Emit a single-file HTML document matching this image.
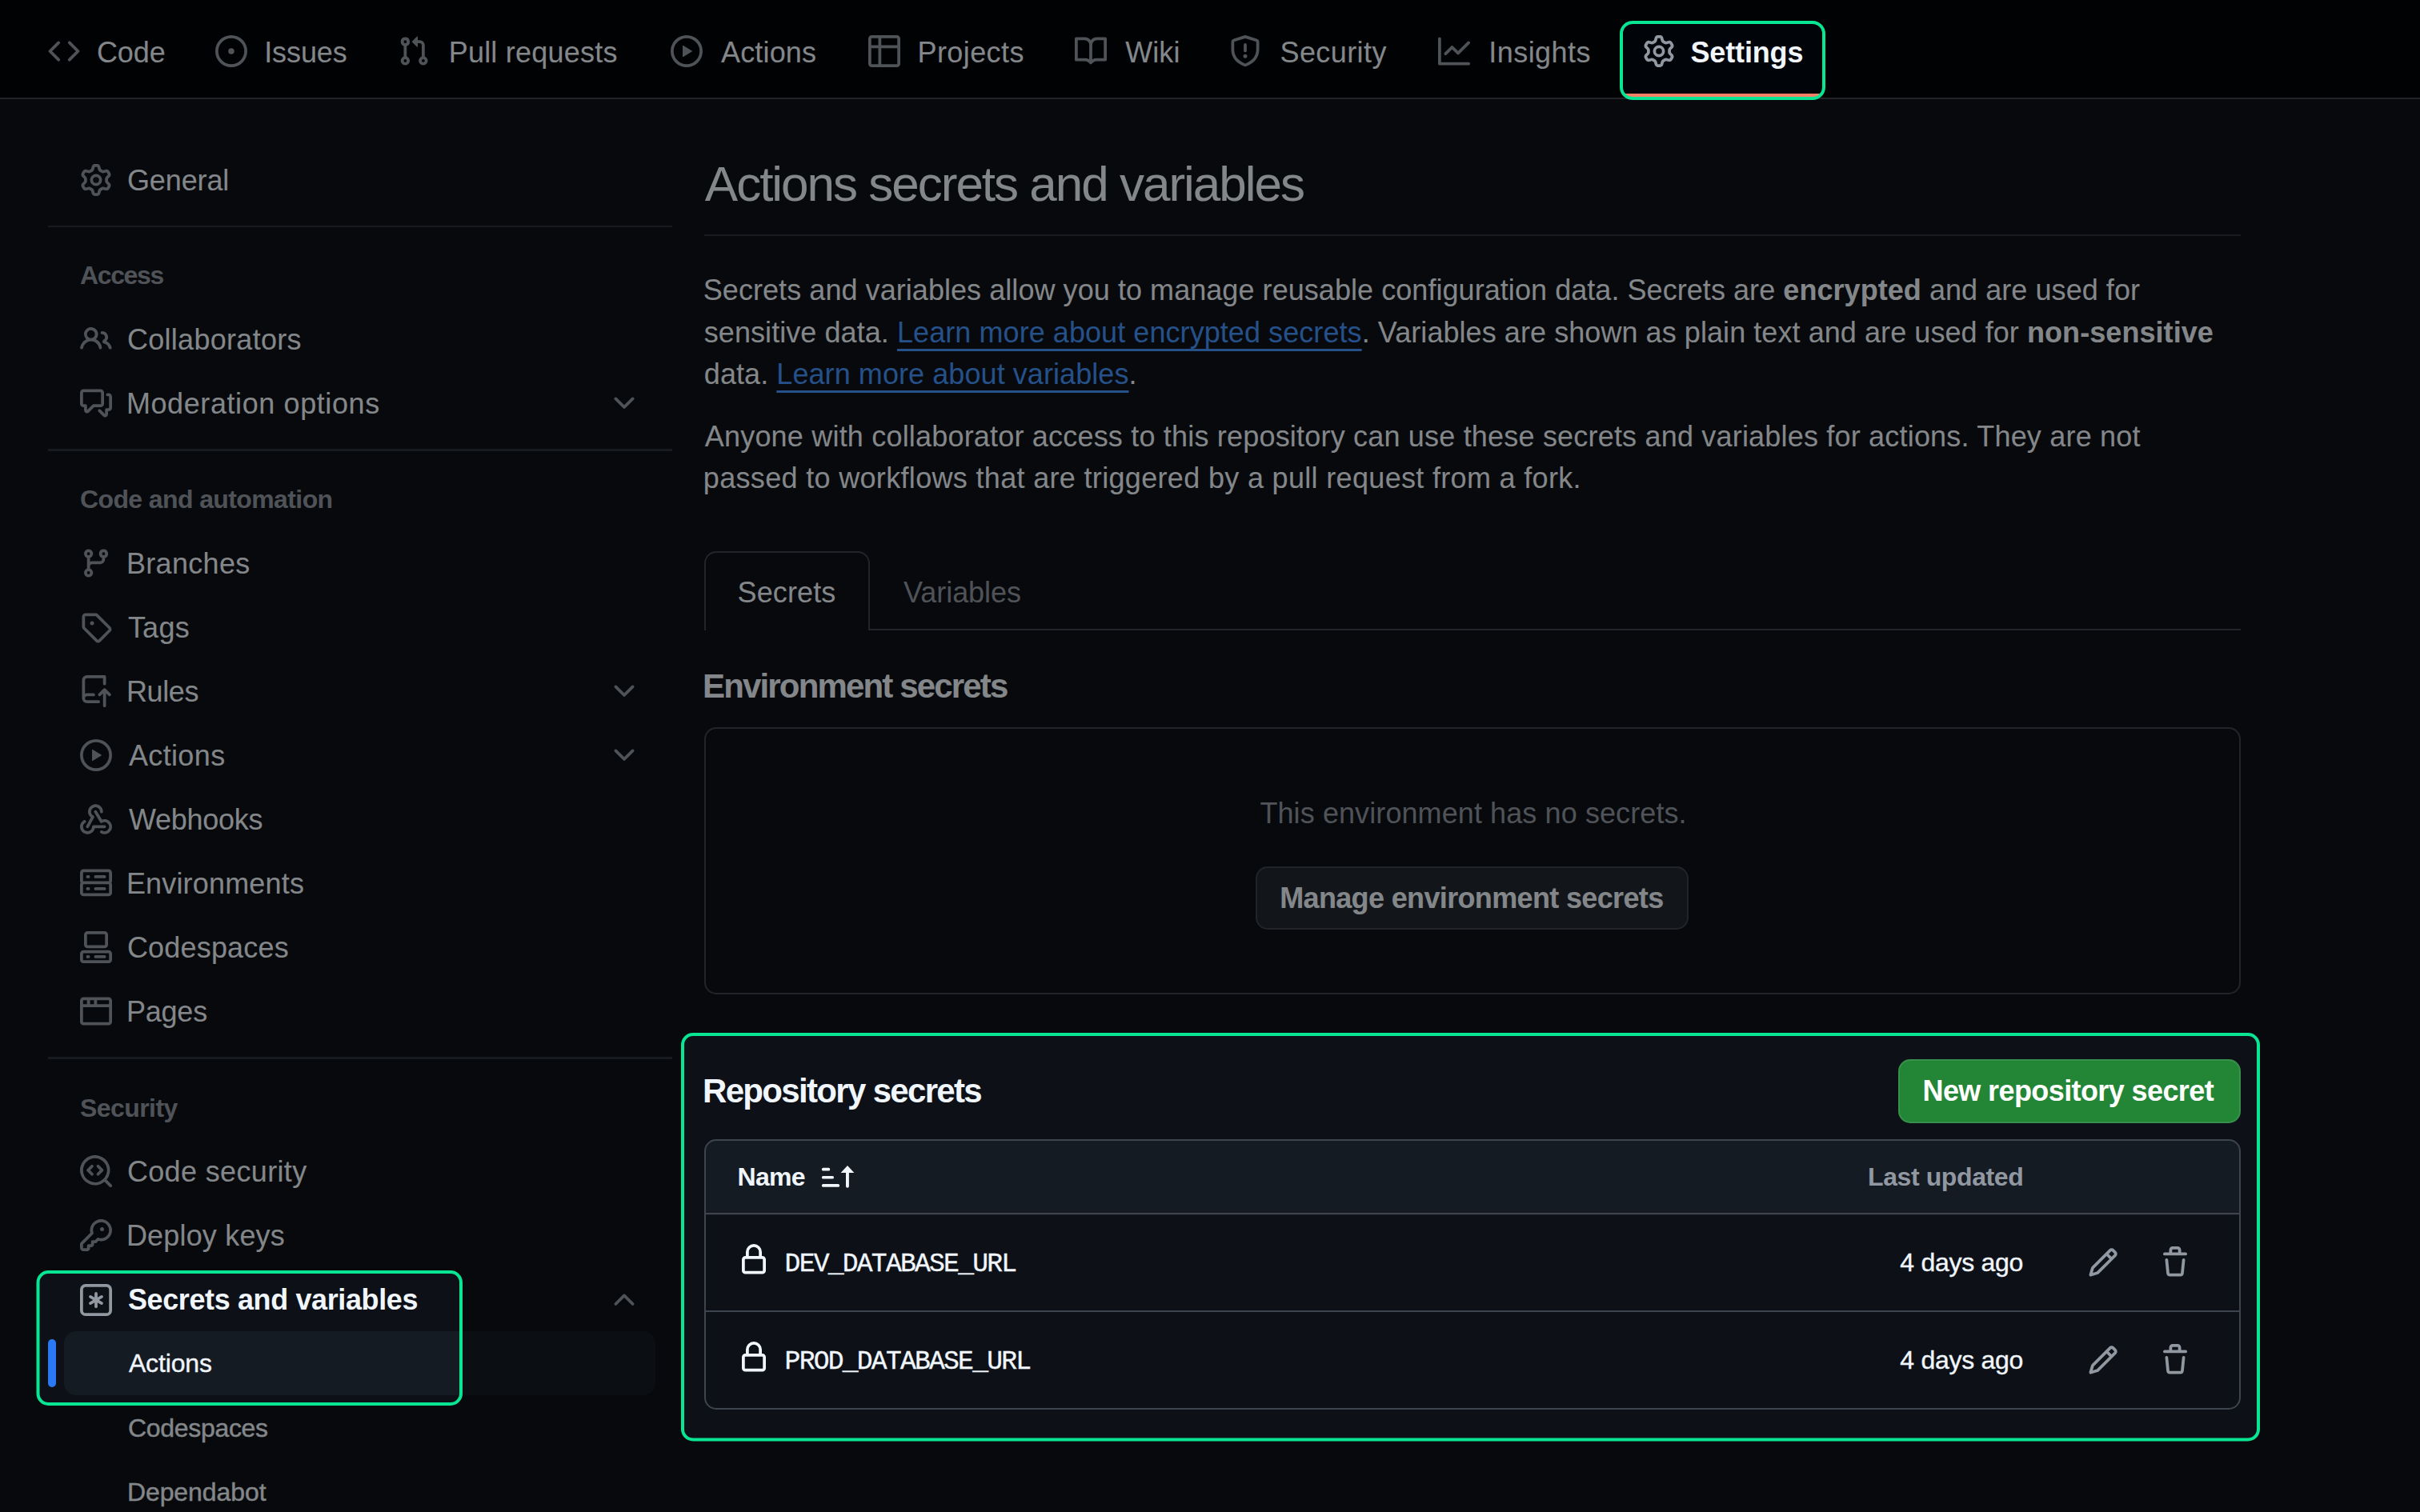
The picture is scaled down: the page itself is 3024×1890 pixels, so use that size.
<!DOCTYPE html>
<html><head><meta charset="utf-8"><title>Actions secrets and variables</title>
<style>
html,body{margin:0;padding:0;}
body{width:3024px;height:1890px;overflow:hidden;background:#0d1117;position:relative;font-family:'Liberation Sans', sans-serif;}
.t{position:absolute;white-space:pre;line-height:1;}
.t b{font-weight:700;}
.s{-webkit-text-stroke:0.35px currentColor;}
.r{position:absolute;}
.i{position:absolute;}
.ov{position:absolute;left:0;top:0;}
</style></head><body>
<div class="r" style="left:0px;top:0px;width:3024px;height:122px;background:#010409;"></div><div class="r" style="left:0px;top:121.5px;width:3024px;height:2.5px;background:#3d444d;"></div><svg class="i" style="left:60.4px;top:44.0px;width:40px;height:40px;fill:#9198a1" viewBox="0 0 16 16"><path d="M4.72 3.22a.75.75 0 0 1 1.06 1.06L2.06 8l3.72 3.72a.75.75 0 1 1-1.06 1.06L.47 8.53a.75.75 0 0 1 0-1.06Zm6.56 0a.75.75 0 1 0-1.06 1.06L13.94 8l-3.72 3.72a.75.75 0 1 0 1.06 1.06l4.25-4.25a.75.75 0 0 0 0-1.06Z"/></svg><div class="t" id="nav0" style="left:120.90px;top:47.8px;font-size:36px;color:#f0f6fc;font-weight:400;letter-spacing:-0.033px;font-family:'Liberation Sans', sans-serif;">Code</div><svg class="i" style="left:269.4px;top:44.0px;width:40px;height:40px;fill:#9198a1" viewBox="0 0 16 16"><path d="M8 9.5a1.5 1.5 0 1 0 0-3 1.5 1.5 0 0 0 0 3Z"/><path d="M8 0a8 8 0 1 1 0 16A8 8 0 0 1 8 0ZM1.5 8a6.5 6.5 0 1 0 13 0 6.5 6.5 0 0 0-13 0Z"/></svg><div class="t" id="nav1" style="left:330.20px;top:47.8px;font-size:36px;color:#f0f6fc;font-weight:400;letter-spacing:-0.100px;font-family:'Liberation Sans', sans-serif;">Issues</div><svg class="i" style="left:497.0px;top:44.0px;width:40px;height:40px;fill:#9198a1" viewBox="0 0 16 16"><path d="M1.5 3.25a2.25 2.25 0 1 1 3 2.122v5.256a2.251 2.251 0 1 1-1.5 0V5.372A2.25 2.25 0 0 1 1.5 3.25Zm5.677-.177L9.573.677A.25.25 0 0 1 10 .854V2.5h1A2.5 2.5 0 0 1 13.5 5v5.628a2.251 2.251 0 1 1-1.5 0V5a1 1 0 0 0-1-1h-1v1.646a.25.25 0 0 1-.427.177L7.177 3.427a.25.25 0 0 1 0-.354ZM3.75 2.5a.75.75 0 1 0 0 1.5.75.75 0 0 0 0-1.5Zm0 9.5a.75.75 0 1 0 0 1.5.75.75 0 0 0 0-1.5Zm8.25.75a.75.75 0 1 0 1.5 0 .75.75 0 0 0-1.5 0Z"/></svg><div class="t" id="nav2" style="left:560.70px;top:47.8px;font-size:36px;color:#f0f6fc;font-weight:400;letter-spacing:0.217px;font-family:'Liberation Sans', sans-serif;">Pull requests</div><svg class="i" style="left:837.5px;top:44.0px;width:40px;height:40px;fill:#9198a1" viewBox="0 0 16 16"><path d="M8 0a8 8 0 1 1 0 16A8 8 0 0 1 8 0ZM1.5 8a6.5 6.5 0 1 0 13 0 6.5 6.5 0 0 0-13 0Zm4.879-2.773 4.264 2.559a.25.25 0 0 1 0 .428l-4.264 2.559A.25.25 0 0 1 6 10.559V5.442a.25.25 0 0 1 .379-.215Z"/></svg><div class="t" id="nav3" style="left:901.00px;top:47.8px;font-size:36px;color:#f0f6fc;font-weight:400;letter-spacing:0.167px;font-family:'Liberation Sans', sans-serif;">Actions</div><svg class="i" style="left:1084.5px;top:44.0px;width:40px;height:40px;fill:#9198a1" viewBox="0 0 16 16"><path d="M0 1.75C0 .784.784 0 1.75 0h12.5C15.216 0 16 .784 16 1.75v12.5A1.75 1.75 0 0 1 14.25 16H1.75A1.75 1.75 0 0 1 0 14.25ZM6.5 6.5v8h7.75a.25.25 0 0 0 .25-.25V6.5Zm8-1.5V1.75a.25.25 0 0 0-.25-.25H6.5V5Zm-13 1.5v7.75c0 .138.112.25.25.25H5v-8ZM5 5V1.5H1.75a.25.25 0 0 0-.25.25V5Z"/></svg><div class="t" id="nav4" style="left:1146.50px;top:47.8px;font-size:36px;color:#f0f6fc;font-weight:400;letter-spacing:0.414px;font-family:'Liberation Sans', sans-serif;">Projects</div><svg class="i" style="left:1343.0px;top:44.0px;width:40px;height:40px;fill:#9198a1" viewBox="0 0 16 16"><path d="M0 1.75A.75.75 0 0 1 .75 1h4.253c1.227 0 2.317.59 3 1.501A3.743 3.743 0 0 1 11.006 1h4.245a.75.75 0 0 1 .75.75v10.5a.75.75 0 0 1-.75.75h-4.507a2.25 2.25 0 0 0-1.591.659l-.622.621a.75.75 0 0 1-1.06 0l-.622-.621A2.25 2.25 0 0 0 5.258 13H.75a.75.75 0 0 1-.75-.75Zm7.251 10.324.004-5.073-.002-2.253A2.25 2.25 0 0 0 5.003 2.5H1.5v9h3.757a3.75 3.75 0 0 1 1.994.574ZM8.755 4.75l-.004 7.322a3.752 3.752 0 0 1 1.992-.572H14.5v-9h-3.495a2.25 2.25 0 0 0-2.25 2.25Z"/></svg><div class="t" id="nav5" style="left:1406.20px;top:47.8px;font-size:36px;color:#f0f6fc;font-weight:400;letter-spacing:0.100px;font-family:'Liberation Sans', sans-serif;">Wiki</div><svg class="i" style="left:1535.9px;top:44.0px;width:40px;height:40px;fill:#9198a1" viewBox="0 0 16 16"><path d="M7.467.133a1.748 1.748 0 0 1 1.066 0l5.25 1.68A1.75 1.75 0 0 1 15 3.48V7c0 1.566-.32 3.182-1.303 4.682-.983 1.498-2.585 2.813-5.032 3.855a1.697 1.697 0 0 1-1.33 0c-2.447-1.042-4.049-2.357-5.032-3.855C1.32 10.182 1 8.566 1 7V3.48a1.755 1.755 0 0 1 1.217-1.667Zm.61 1.429a.25.25 0 0 0-.153 0l-5.25 1.68a.25.25 0 0 0-.174.238V7c0 1.358.275 2.666 1.057 3.86.784 1.194 2.121 2.34 4.366 3.297a.196.196 0 0 0 .154 0c2.245-.956 3.582-2.104 4.366-3.298C13.225 9.666 13.5 8.36 13.5 7V3.48a.251.251 0 0 0-.174-.237l-5.25-1.68ZM8.75 4.75v3a.75.75 0 0 1-1.5 0v-3a.75.75 0 0 1 1.5 0ZM9 10.5a1 1 0 1 1-2 0 1 1 0 0 1 2 0Z"/></svg><div class="t" id="nav6" style="left:1599.50px;top:47.8px;font-size:36px;color:#f0f6fc;font-weight:400;letter-spacing:0.414px;font-family:'Liberation Sans', sans-serif;">Security</div><svg class="i" style="left:1797.3px;top:44.0px;width:40px;height:40px;fill:#9198a1" viewBox="0 0 16 16"><path d="M1.5 1.75V13.5h13.75a.75.75 0 0 1 0 1.5H.75a.75.75 0 0 1-.75-.75V1.75a.75.75 0 0 1 1.5 0Zm14.28 2.53-5.25 5.25a.75.75 0 0 1-1.06 0L7 7.06 4.28 9.78a.751.751 0 0 1-1.042-.018.751.751 0 0 1-.018-1.042l3.25-3.25a.75.75 0 0 1 1.06 0L10 7.94l4.72-4.72a.751.751 0 0 1 1.042.018.751.751 0 0 1 .018 1.042Z"/></svg><div class="t" id="nav7" style="left:1860.30px;top:47.8px;font-size:36px;color:#f0f6fc;font-weight:400;letter-spacing:0.443px;font-family:'Liberation Sans', sans-serif;">Insights</div><svg class="i" style="left:2053.0px;top:44.0px;width:40px;height:40px;fill:#9198a1" viewBox="0 0 16 16"><path d="M8 0a8.2 8.2 0 0 1 .701.031C9.444.095 9.99.645 10.16 1.29l.288 1.107c.018.066.079.158.212.224.231.114.454.243.668.386.123.082.233.09.299.071l1.103-.303c.644-.176 1.392.021 1.82.63.27.385.506.792.704 1.218.315.675.111 1.422-.364 1.891l-.814.806c-.049.048-.098.147-.088.294.016.257.016.515 0 .772-.01.147.038.246.088.294l.814.806c.475.469.679 1.216.364 1.891a7.977 7.977 0 0 1-.704 1.217c-.428.61-1.176.807-1.82.63l-1.102-.302c-.067-.019-.177-.011-.3.071a5.909 5.909 0 0 1-.668.386c-.133.066-.194.158-.211.224l-.29 1.106c-.168.646-.715 1.196-1.458 1.26a8.006 8.006 0 0 1-1.402 0c-.743-.064-1.289-.614-1.458-1.26l-.289-1.106c-.018-.066-.079-.158-.212-.224a5.738 5.738 0 0 1-.668-.386c-.123-.082-.233-.09-.299-.071l-1.103.303c-.644.176-1.392-.021-1.82-.63a8.12 8.12 0 0 1-.704-1.218c-.315-.675-.111-1.422.363-1.891l.815-.806c.05-.048.098-.147.088-.294a6.214 6.214 0 0 1 0-.772c.01-.147-.038-.246-.088-.294l-.815-.806C.635 6.045.431 5.298.746 4.623a7.92 7.92 0 0 1 .704-1.217c.428-.61 1.176-.807 1.82-.63l1.102.302c.067.019.177.011.3-.071.214-.143.437-.272.668-.386.133-.066.194-.158.211-.224l.29-1.106C6.009.645 6.556.095 7.299.03 7.53.01 7.764 0 8 0Zm-.571 1.525c-.036.003-.108.036-.137.146l-.289 1.105c-.147.561-.549.967-.998 1.189-.173.086-.34.183-.5.29-.417.278-.97.423-1.529.27l-1.103-.303c-.109-.03-.175.016-.195.045-.22.312-.412.644-.573.99-.014.031-.021.11.059.19l.815.806c.411.406.562.957.53 1.456a4.709 4.709 0 0 0 0 .582c.032.499-.119 1.05-.53 1.456l-.815.806c-.081.08-.073.159-.059.19.162.346.353.677.573.989.02.03.085.076.195.046l1.102-.303c.56-.153 1.113-.008 1.53.27.161.107.328.204.501.29.447.222.85.629.997 1.189l.289 1.105c.029.109.101.143.137.146a6.6 6.6 0 0 0 1.142 0c.036-.003.108-.036.137-.146l.289-1.105c.147-.561.549-.967.998-1.189.173-.086.34-.183.5-.29.417-.278.97-.423 1.529-.27l1.103.303c.109.029.175-.016.195-.045.22-.313.411-.644.573-.99.014-.031.021-.11-.059-.19l-.815-.806c-.411-.406-.562-.957-.53-1.456a4.709 4.709 0 0 0 0-.582c-.032-.499.119-1.05.53-1.456l.815-.806c.081-.08.073-.159.059-.19a6.464 6.464 0 0 0-.573-.989c-.02-.03-.085-.076-.195-.046l-1.102.303c-.56.153-1.113.008-1.53-.27a4.44 4.44 0 0 0-.501-.29c-.447-.222-.85-.629-.997-1.189l-.289-1.105c-.029-.11-.101-.143-.137-.146a6.6 6.6 0 0 0-1.142 0ZM11 8a3 3 0 1 1-6 0 3 3 0 0 1 6 0ZM9.5 8a1.5 1.5 0 1 0-3.001.001A1.5 1.5 0 0 0 9.5 8Z"/></svg><div class="t" id="navset" style="left:2112.50px;top:47.8px;font-size:36px;color:#f0f6fc;font-weight:700;letter-spacing:-0.157px;font-family:'Liberation Sans', sans-serif;">Settings</div><div class="r" style="left:2030px;top:116.5px;width:244px;height:4px;background:#f78166;"></div><svg class="i" style="left:99.5px;top:205.3px;width:40px;height:40px;fill:#9198a1" viewBox="0 0 16 16"><path d="M8 0a8.2 8.2 0 0 1 .701.031C9.444.095 9.99.645 10.16 1.29l.288 1.107c.018.066.079.158.212.224.231.114.454.243.668.386.123.082.233.09.299.071l1.103-.303c.644-.176 1.392.021 1.82.63.27.385.506.792.704 1.218.315.675.111 1.422-.364 1.891l-.814.806c-.049.048-.098.147-.088.294.016.257.016.515 0 .772-.01.147.038.246.088.294l.814.806c.475.469.679 1.216.364 1.891a7.977 7.977 0 0 1-.704 1.217c-.428.61-1.176.807-1.82.63l-1.102-.302c-.067-.019-.177-.011-.3.071a5.909 5.909 0 0 1-.668.386c-.133.066-.194.158-.211.224l-.29 1.106c-.168.646-.715 1.196-1.458 1.26a8.006 8.006 0 0 1-1.402 0c-.743-.064-1.289-.614-1.458-1.26l-.289-1.106c-.018-.066-.079-.158-.212-.224a5.738 5.738 0 0 1-.668-.386c-.123-.082-.233-.09-.299-.071l-1.103.303c-.644.176-1.392-.021-1.82-.63a8.12 8.12 0 0 1-.704-1.218c-.315-.675-.111-1.422.363-1.891l.815-.806c.05-.048.098-.147.088-.294a6.214 6.214 0 0 1 0-.772c.01-.147-.038-.246-.088-.294l-.815-.806C.635 6.045.431 5.298.746 4.623a7.92 7.92 0 0 1 .704-1.217c.428-.61 1.176-.807 1.82-.63l1.102.302c.067.019.177.011.3-.071.214-.143.437-.272.668-.386.133-.066.194-.158.211-.224l.29-1.106C6.009.645 6.556.095 7.299.03 7.53.01 7.764 0 8 0Zm-.571 1.525c-.036.003-.108.036-.137.146l-.289 1.105c-.147.561-.549.967-.998 1.189-.173.086-.34.183-.5.29-.417.278-.97.423-1.529.27l-1.103-.303c-.109-.03-.175.016-.195.045-.22.312-.412.644-.573.99-.014.031-.021.11.059.19l.815.806c.411.406.562.957.53 1.456a4.709 4.709 0 0 0 0 .582c.032.499-.119 1.05-.53 1.456l-.815.806c-.081.08-.073.159-.059.19.162.346.353.677.573.989.02.03.085.076.195.046l1.102-.303c.56-.153 1.113-.008 1.53.27.161.107.328.204.501.29.447.222.85.629.997 1.189l.289 1.105c.029.109.101.143.137.146a6.6 6.6 0 0 0 1.142 0c.036-.003.108-.036.137-.146l.289-1.105c.147-.561.549-.967.998-1.189.173-.086.34-.183.5-.29.417-.278.97-.423 1.529-.27l1.103.303c.109.029.175-.016.195-.045.22-.313.411-.644.573-.99.014-.031.021-.11-.059-.19l-.815-.806c-.411-.406-.562-.957-.53-1.456a4.709 4.709 0 0 0 0-.582c-.032-.499.119-1.05.53-1.456l.815-.806c.081-.08.073-.159.059-.19a6.464 6.464 0 0 0-.573-.989c-.02-.03-.085-.076-.195-.046l-1.102.303c-.56.153-1.113.008-1.53-.27a4.44 4.44 0 0 0-.501-.29c-.447-.222-.85-.629-.997-1.189l-.289-1.105c-.029-.11-.101-.143-.137-.146a6.6 6.6 0 0 0-1.142 0ZM11 8a3 3 0 1 1-6 0 3 3 0 0 1 6 0ZM9.5 8a1.5 1.5 0 1 0-3.001.001A1.5 1.5 0 0 0 9.5 8Z"/></svg><div class="t" id="sb_general" style="left:158.90px;top:207.5px;font-size:36px;color:#f0f6fc;font-weight:400;letter-spacing:-0.100px;font-family:'Liberation Sans', sans-serif;">General</div><div class="r" style="left:60px;top:281.8px;width:780px;height:2.5px;background:#2a3038;"></div><div class="t" id="sh_access" style="left:100.00px;top:327.9px;font-size:32px;color:#9198a1;font-weight:700;letter-spacing:-1.360px;font-family:'Liberation Sans', sans-serif;">Access</div><svg class="i" style="left:99.5px;top:404.3px;width:40px;height:40px;fill:#9198a1" viewBox="0 0 16 16"><path d="M2 5.5a3.5 3.5 0 1 1 5.898 2.549 5.508 5.508 0 0 1 3.034 4.084.75.75 0 1 1-1.482.235 4 4 0 0 0-7.9 0 .75.75 0 0 1-1.482-.236A5.507 5.507 0 0 1 3.102 8.05 3.493 3.493 0 0 1 2 5.5ZM11 4a3.001 3.001 0 0 1 2.22 5.018 5.01 5.01 0 0 1 2.56 3.012.749.749 0 0 1-.885.954.752.752 0 0 1-.549-.514 3.507 3.507 0 0 0-2.522-2.372.75.75 0 0 1-.574-.73v-.352a.75.75 0 0 1 .416-.672A1.5 1.5 0 0 0 11 5.5.75.75 0 0 1 11 4Zm-5.5-.5a2 2 0 1 0-.001 3.999A2 2 0 0 0 5.5 3.5Z"/></svg><div class="t" id="sb_collab" style="left:158.90px;top:406.5px;font-size:36px;color:#f0f6fc;font-weight:400;letter-spacing:0.300px;font-family:'Liberation Sans', sans-serif;">Collaborators</div><svg class="i" style="left:99.5px;top:484.3px;width:40px;height:40px;fill:#9198a1" viewBox="0 0 16 16"><path d="M1.75 1h8.5c.966 0 1.75.784 1.75 1.75v5.5A1.75 1.75 0 0 1 10.25 10H7.061l-2.574 2.573A1.458 1.458 0 0 1 2 11.543V10h-.25A1.75 1.75 0 0 1 0 8.25v-5.5C0 1.784.784 1 1.75 1ZM1.5 2.75v5.5c0 .138.112.25.25.25h1a.75.75 0 0 1 .75.75v2.19l2.72-2.72a.749.749 0 0 1 .53-.22h3.5a.25.25 0 0 0 .25-.25v-5.5a.25.25 0 0 0-.25-.25h-8.5a.25.25 0 0 0-.25.25Zm13 2a.25.25 0 0 0-.25-.25h-.5a.75.75 0 0 1 0-1.5h.5c.966 0 1.75.784 1.75 1.75v5.5A1.75 1.75 0 0 1 14.25 12H14v1.543a1.458 1.458 0 0 1-2.487 1.03L9.22 12.28a.749.749 0 0 1 .326-1.275.749.749 0 0 1 .734.215l2.22 2.22v-2.19a.75.75 0 0 1 .75-.75h1a.25.25 0 0 0 .25-.25Z"/></svg><div class="t" id="sb_mod" style="left:157.90px;top:486.5px;font-size:36px;color:#f0f6fc;font-weight:400;letter-spacing:0.594px;font-family:'Liberation Sans', sans-serif;">Moderation options</div><svg class="i" style="left:760.0px;top:484.2px;width:40px;height:40px;fill:#9198a1" viewBox="0 0 16 16"><path d="M12.78 5.22a.749.749 0 0 1 0 1.06l-4.25 4.25a.749.749 0 0 1-1.06 0L3.22 6.28a.749.749 0 1 1 1.06-1.06L8 8.939l3.72-3.719a.749.749 0 0 1 1.06 0Z"/></svg><div class="r" style="left:60px;top:561.4px;width:780px;height:2.5px;background:#2a3038;"></div><div class="t" id="sh_code" style="left:100.00px;top:608.4px;font-size:32px;color:#9198a1;font-weight:700;letter-spacing:-0.611px;font-family:'Liberation Sans', sans-serif;">Code and automation</div><svg class="i" style="left:99.5px;top:684.3px;width:40px;height:40px;fill:#9198a1" viewBox="0 0 16 16"><path d="M9.5 3.25a2.25 2.25 0 1 1 3 2.122V6A2.5 2.5 0 0 1 10 8.5H6a1 1 0 0 0-1 1v1.128a2.251 2.251 0 1 1-1.5 0V5.372a2.25 2.25 0 1 1 1.5 0v1.836A2.493 2.493 0 0 1 6 7h4a1 1 0 0 0 1-1v-.628A2.25 2.25 0 0 1 9.5 3.25Zm-6 0a.75.75 0 1 0 1.5 0 .75.75 0 0 0-1.5 0Zm8.25-.75a.75.75 0 1 0 0 1.5.75.75 0 0 0 0-1.5ZM4.25 12a.75.75 0 1 0 0 1.5.75.75 0 0 0 0-1.5Z"/></svg><div class="t" id="sb_branches" style="left:157.90px;top:686.5px;font-size:36px;color:#f0f6fc;font-weight:400;letter-spacing:0.329px;font-family:'Liberation Sans', sans-serif;">Branches</div><svg class="i" style="left:99.5px;top:764.3px;width:40px;height:40px;fill:#9198a1" viewBox="0 0 16 16"><path d="M1 7.775V2.75C1 1.784 1.784 1 2.75 1h5.025c.464 0 .91.184 1.238.513l6.25 6.25a1.75 1.75 0 0 1 0 2.474l-5.026 5.026a1.75 1.75 0 0 1-2.474 0l-6.25-6.25A1.752 1.752 0 0 1 1 7.775Zm1.5 0c0 .066.026.13.073.177l6.25 6.25a.25.25 0 0 0 .354 0l5.025-5.025a.25.25 0 0 0 0-.354l-6.25-6.25a.25.25 0 0 0-.177-.073H2.75a.25.25 0 0 0-.25.25ZM6 5a1 1 0 1 1 0 2 1 1 0 0 1 0-2Z"/></svg><div class="t" id="sb_tags" style="left:159.90px;top:766.5px;font-size:36px;color:#f0f6fc;font-weight:400;letter-spacing:0.233px;font-family:'Liberation Sans', sans-serif;">Tags</div><svg class="i" style="left:99.5px;top:844.3px;width:40px;height:40px;fill:#9198a1" viewBox="0 0 16 16"><path d="M1 2.5A2.5 2.5 0 0 1 3.5 0h8.75a.75.75 0 0 1 .75.75v3.5a.75.75 0 0 1-1.5 0V1.5h-8a1 1 0 0 0-1 1v6.708A2.493 2.493 0 0 1 3.5 9h3.25a.75.75 0 0 1 0 1.5H3.5a1 1 0 0 0 0 2h5.75a.75.75 0 0 1 0 1.5H3.5A2.5 2.5 0 0 1 1 11.5Zm13.23 7.79h-.001l-1.224-1.224v6.184a.75.75 0 0 1-1.5 0V9.066L10.28 10.29a.75.75 0 0 1-1.06-1.061l2.505-2.504a.75.75 0 0 1 1.06 0L15.29 9.23a.751.751 0 0 1-.018 1.042.751.751 0 0 1-1.042.018Z"/></svg><div class="t" id="sb_rules" style="left:157.90px;top:846.5px;font-size:36px;color:#f0f6fc;font-weight:400;letter-spacing:-0.350px;font-family:'Liberation Sans', sans-serif;">Rules</div><svg class="i" style="left:760.0px;top:844.2px;width:40px;height:40px;fill:#9198a1" viewBox="0 0 16 16"><path d="M12.78 5.22a.749.749 0 0 1 0 1.06l-4.25 4.25a.749.749 0 0 1-1.06 0L3.22 6.28a.749.749 0 1 1 1.06-1.06L8 8.939l3.72-3.719a.749.749 0 0 1 1.06 0Z"/></svg><svg class="i" style="left:99.5px;top:924.3px;width:40px;height:40px;fill:#9198a1" viewBox="0 0 16 16"><path d="M8 0a8 8 0 1 1 0 16A8 8 0 0 1 8 0ZM1.5 8a6.5 6.5 0 1 0 13 0 6.5 6.5 0 0 0-13 0Zm4.879-2.773 4.264 2.559a.25.25 0 0 1 0 .428l-4.264 2.559A.25.25 0 0 1 6 10.559V5.442a.25.25 0 0 1 .379-.215Z"/></svg><div class="t" id="sb_actions" style="left:160.90px;top:926.5px;font-size:36px;color:#f0f6fc;font-weight:400;letter-spacing:0.367px;font-family:'Liberation Sans', sans-serif;">Actions</div><svg class="i" style="left:760.0px;top:924.2px;width:40px;height:40px;fill:#9198a1" viewBox="0 0 16 16"><path d="M12.78 5.22a.749.749 0 0 1 0 1.06l-4.25 4.25a.749.749 0 0 1-1.06 0L3.22 6.28a.749.749 0 1 1 1.06-1.06L8 8.939l3.72-3.719a.749.749 0 0 1 1.06 0Z"/></svg><svg class="i" style="left:99.5px;top:1004.3px;width:40px;height:40px;fill:#9198a1" viewBox="0 0 16 16"><path d="M5.5 4.25a2.25 2.25 0 0 1 4.5 0 .75.75 0 0 0 1.5 0 3.75 3.75 0 1 0-6.14 2.889l-2.272 4.258a.75.75 0 0 0 1.324.706L7 7.25a.75.75 0 0 0-.309-1.015A2.25 2.25 0 0 1 5.5 4.25Z"/><path d="M7.364 3.607a.75.75 0 0 1 1.03.257l2.608 4.349a3.75 3.75 0 1 1-.628 6.785.75.75 0 0 1 .752-1.299 2.25 2.25 0 1 0-.033-3.88.75.75 0 0 1-1.03-.256L7.107 4.636a.75.75 0 0 1 .257-1.03Z"/><path d="M2.9 8.776A.75.75 0 0 1 2.625 9.8 2.25 2.25 0 1 0 6 11.75a.75.75 0 0 1 .75-.751h5.5a.75.75 0 0 1 0 1.5H7.425a3.751 3.751 0 1 1-5.55-3.998.75.75 0 0 1 1.024.274Z"/></svg><div class="t" id="sb_webhooks" style="left:160.90px;top:1006.5px;font-size:36px;color:#f0f6fc;font-weight:400;letter-spacing:-0.271px;font-family:'Liberation Sans', sans-serif;">Webhooks</div><svg class="i" style="left:99.5px;top:1084.3px;width:40px;height:40px;fill:#9198a1" viewBox="0 0 16 16"><path d="M1.75 1h12.5c.966 0 1.75.784 1.75 1.75v4c0 .372-.116.717-.314 1 .198.283.314.628.314 1v4a1.75 1.75 0 0 1-1.75 1.75H1.75A1.75 1.75 0 0 1 0 12.75v-4c0-.358.109-.707.314-1a1.739 1.739 0 0 1-.314-1v-4C0 1.784.784 1 1.75 1ZM1.5 2.75v4c0 .138.112.25.25.25h12.5a.25.25 0 0 0 .25-.25v-4a.25.25 0 0 0-.25-.25H1.75a.25.25 0 0 0-.25.25Zm.25 5.75a.25.25 0 0 0-.25.25v4c0 .138.112.25.25.25h12.5a.25.25 0 0 0 .25-.25v-4a.25.25 0 0 0-.25-.25ZM7 4.75A.75.75 0 0 1 7.75 4h4.5a.75.75 0 0 1 0 1.5h-4.5A.75.75 0 0 1 7 4.75ZM7.75 10h4.5a.75.75 0 0 1 0 1.5h-4.5a.75.75 0 0 1 0-1.5ZM3 4.75A.75.75 0 0 1 3.75 4h.5a.75.75 0 0 1 0 1.5h-.5A.75.75 0 0 1 3 4.75ZM3.75 10h.5a.75.75 0 0 1 0 1.5h-.5a.75.75 0 0 1 0-1.5Z"/></svg><div class="t" id="sb_envs" style="left:157.90px;top:1086.5px;font-size:36px;color:#f0f6fc;font-weight:400;letter-spacing:0.173px;font-family:'Liberation Sans', sans-serif;">Environments</div><svg class="i" style="left:99.5px;top:1164.3px;width:40px;height:40px;fill:#9198a1" viewBox="0 0 16 16"><path d="M0 11.25c0-.966.784-1.75 1.75-1.75h12.5c.966 0 1.75.784 1.75 1.75v3A1.75 1.75 0 0 1 14.25 16H1.75A1.75 1.75 0 0 1 0 14.25Zm2-9.5C2 .784 2.784 0 3.75 0h8.5C13.216 0 14 .784 14 1.75v5a1.75 1.75 0 0 1-1.75 1.75h-8.5A1.75 1.75 0 0 1 2 6.75Zm1.75-.25a.25.25 0 0 0-.25.25v5c0 .138.112.25.25.25h8.5a.25.25 0 0 0 .25-.25v-5a.25.25 0 0 0-.25-.25Zm-2 9.5a.25.25 0 0 0-.25.25v3c0 .138.112.25.25.25h12.5a.25.25 0 0 0 .25-.25v-3a.25.25 0 0 0-.25-.25Z"/><path d="M7 12.75a.75.75 0 0 1 .75-.75h4.5a.75.75 0 0 1 0 1.5h-4.5a.75.75 0 0 1-.75-.75Zm-4 0a.75.75 0 0 1 .75-.75h.5a.75.75 0 0 1 0 1.5h-.5a.75.75 0 0 1-.75-.75Z"/></svg><div class="t" id="sb_cs" style="left:158.90px;top:1166.5px;font-size:36px;color:#f0f6fc;font-weight:400;letter-spacing:0.189px;font-family:'Liberation Sans', sans-serif;">Codespaces</div><svg class="i" style="left:99.5px;top:1244.3px;width:40px;height:40px;fill:#9198a1" viewBox="0 0 16 16"><path d="M0 2.75C0 1.784.784 1 1.75 1h12.5c.966 0 1.75.784 1.75 1.75v10.5A1.75 1.75 0 0 1 14.25 15H1.75A1.75 1.75 0 0 1 0 13.25ZM14.5 6h-13v7.25c0 .138.112.25.25.25h12.5a.25.25 0 0 0 .25-.25Zm-6-3.5v2h6V2.75a.25.25 0 0 0-.25-.25ZM5 2.5v2h2v-2Zm-3.25 0a.25.25 0 0 0-.25.25V4.5h2v-2Z"/></svg><div class="t" id="sb_pages" style="left:157.90px;top:1246.5px;font-size:36px;color:#f0f6fc;font-weight:400;letter-spacing:-0.200px;font-family:'Liberation Sans', sans-serif;">Pages</div><div class="r" style="left:60px;top:1321px;width:780px;height:2.5px;background:#2a3038;"></div><div class="t" id="sh_sec" style="left:100.00px;top:1368.5px;font-size:32px;color:#9198a1;font-weight:700;letter-spacing:-0.571px;font-family:'Liberation Sans', sans-serif;">Security</div><svg class="i" style="left:99.5px;top:1444.3px;width:40px;height:40px;fill:#9198a1" viewBox="0 0 16 16"><path d="M8.47 4.97a.75.75 0 0 0 0 1.06L9.94 7.5 8.47 8.97a.75.75 0 1 0 1.06 1.06l2-2a.75.75 0 0 0 0-1.06l-2-2a.75.75 0 0 0-1.06 0ZM6.53 6.03a.75.75 0 0 0-1.06-1.06l-2 2a.75.75 0 0 0 0 1.06l2 2a.75.75 0 1 0 1.06-1.06L5.06 7.5l1.47-1.47Z"/><path d="M12.246 13.307a7.501 7.501 0 1 1 1.06-1.06l2.474 2.473a.749.749 0 0 1-.326 1.275.749.749 0 0 1-.734-.215ZM1.5 7.5a6.002 6.002 0 0 0 3.608 5.504 6.002 6.002 0 0 0 6.464-1.088c.005-.006.012-.01.017-.016.006-.005.01-.012.016-.017a6 6 0 1 0-10.105-4.383Z"/></svg><div class="t" id="sb_codesec" style="left:158.90px;top:1446.5px;font-size:36px;color:#f0f6fc;font-weight:400;letter-spacing:0.350px;font-family:'Liberation Sans', sans-serif;">Code security</div><svg class="i" style="left:99.5px;top:1524.3px;width:40px;height:40px;fill:#9198a1" viewBox="0 0 16 16"><path d="M10.5 0a5.499 5.499 0 1 1-1.288 10.848l-.932.932a.749.749 0 0 1-.53.22H7v.75a.749.749 0 0 1-.22.53l-.5.5a.749.749 0 0 1-.53.22H5v.75a.749.749 0 0 1-.22.53l-.5.5a.749.749 0 0 1-.53.22h-2A1.75 1.75 0 0 1 0 14.25v-2c0-.199.079-.389.22-.53l4.932-4.932A5.5 5.5 0 0 1 10.5 0Zm-4 5.5c-.001.431.069.86.205 1.269a.75.75 0 0 1-.181.768L1.5 12.56v1.69c0 .138.112.25.25.25h1.69l.06-.06v-1.19a.75.75 0 0 1 .75-.75h1.19l.06-.06v-1.19a.75.75 0 0 1 .75-.75h1.19l1.023-1.025a.75.75 0 0 1 .768-.18A4 4 0 1 0 6.5 5.5ZM11 6a1 1 0 1 1 0-2 1 1 0 0 1 0 2Z"/></svg><div class="t" id="sb_deploy" style="left:157.90px;top:1526.5px;font-size:36px;color:#f0f6fc;font-weight:400;letter-spacing:0.180px;font-family:'Liberation Sans', sans-serif;">Deploy keys</div><svg class="i" style="left:99.5px;top:1604.8px;width:40px;height:40px;fill:#9198a1" viewBox="0 0 16 16"><path d="M0 2.75A2.75 2.75 0 0 1 2.75 0h10.5A2.75 2.75 0 0 1 16 2.75v10.5A2.75 2.75 0 0 1 13.25 16H2.75A2.75 2.75 0 0 1 0 13.25ZM2.75 1.5c-.69 0-1.25.56-1.25 1.25v10.5c0 .69.56 1.25 1.25 1.25h10.5c.69 0 1.25-.56 1.25-1.25V2.75c0-.69-.56-1.25-1.25-1.25Z"/><path d="M8 4a.75.75 0 0 1 .75.75V6.7l1.69-.975a.75.75 0 0 1 .75 1.3L9.5 8l1.69.976a.75.75 0 0 1-.75 1.298L8.75 9.3v1.951a.75.75 0 0 1-1.5 0V9.299l-1.69.976a.75.75 0 0 1-.75-1.3L6.5 8l-1.69-.975a.75.75 0 0 1 .75-1.3l1.69.976V4.75A.75.75 0 0 1 8 4Z"/></svg><div class="t" id="sb_secvars" style="left:159.90px;top:1607.0px;font-size:36px;color:#f0f6fc;font-weight:700;letter-spacing:-0.380px;font-family:'Liberation Sans', sans-serif;">Secrets and variables</div><svg class="i" style="left:760.0px;top:1604.7px;width:40px;height:40px;fill:#9198a1" viewBox="0 0 16 16"><path d="M3.22 10.53a.749.749 0 0 1 0-1.06l4.25-4.25a.749.749 0 0 1 1.06 0l4.25 4.25a.749.749 0 0 1-1.06 1.06L8 6.811 4.28 10.53a.749.749 0 0 1-1.06 0Z"/></svg><div class="r" style="left:80px;top:1664px;width:739px;height:80px;background:#151b23;border-radius:15px;"></div><div class="r" style="left:59.7px;top:1673.7px;width:10.5px;height:60.5px;background:#2a78f2;border-radius:6px;"></div><div class="t s" id="sub_actions" style="left:160.90px;top:1688.2px;font-size:32px;color:#f0f6fc;font-weight:400;letter-spacing:-0.133px;font-family:'Liberation Sans', sans-serif;">Actions</div><div class="t s" id="sub_cs" style="left:159.90px;top:1768.5px;font-size:32px;color:#f0f6fc;font-weight:400;letter-spacing:-0.300px;font-family:'Liberation Sans', sans-serif;">Codespaces</div><div class="t s" id="sub_dep" style="left:158.90px;top:1848.5px;font-size:32px;color:#f0f6fc;font-weight:400;letter-spacing:-0.078px;font-family:'Liberation Sans', sans-serif;">Dependabot</div><div class="t" id="h1" style="left:880.80px;top:199.2px;font-size:62px;color:#f0f6fc;font-weight:400;letter-spacing:-2.007px;font-family:'Liberation Sans', sans-serif;">Actions secrets and variables</div><div class="r" style="left:880px;top:293.3px;width:1920px;height:2px;background:#2a3038;"></div><div class="t" id="p1" style="left:878.80px;top:345.2px;font-size:36px;color:#f0f6fc;font-weight:400;letter-spacing:0.057px;font-family:'Liberation Sans', sans-serif;">Secrets and variables allow you to manage reusable configuration data. Secrets are <b>encrypted</b> and are used for</div><div class="t" id="p2" style="left:879.80px;top:398.1px;font-size:36px;color:#f0f6fc;font-weight:400;letter-spacing:0.067px;font-family:'Liberation Sans', sans-serif;">sensitive data. <span style="color:#4493f8;text-decoration:underline;text-decoration-thickness:2.5px;text-underline-offset:8px">Learn more about encrypted secrets</span>. Variables are shown as plain text and are used for <b>non-sensitive</b></div><div class="t" id="p3" style="left:879.80px;top:449.5px;font-size:36px;color:#f0f6fc;font-weight:400;letter-spacing:0.075px;font-family:'Liberation Sans', sans-serif;">data. <span style="color:#4493f8;text-decoration:underline;text-decoration-thickness:2.5px;text-underline-offset:8px">Learn more about variables</span>.</div><div class="t" id="p4" style="left:880.80px;top:528.3px;font-size:36px;color:#f0f6fc;font-weight:400;letter-spacing:0.193px;font-family:'Liberation Sans', sans-serif;">Anyone with collaborator access to this repository can use these secrets and variables for actions. They are not</div><div class="t" id="p5" style="left:878.80px;top:579.9px;font-size:36px;color:#f0f6fc;font-weight:400;letter-spacing:0.328px;font-family:'Liberation Sans', sans-serif;">passed to workflows that are triggered by a pull request from a fork.</div><div class="r" style="left:880px;top:689px;width:207px;height:99px;background:#0d1117;border:2px solid #3d444d;box-sizing:border-box;border-radius:15px;border-bottom:none;border-bottom-left-radius:0;border-bottom-right-radius:0;"></div><div class="r" style="left:1085px;top:786px;width:1715px;height:2px;background:#3d444d;"></div><div class="t" id="tab1" style="left:921.50px;top:723.2px;font-size:36px;color:#f0f6fc;font-weight:400;letter-spacing:0.133px;font-family:'Liberation Sans', sans-serif;">Secrets</div><div class="t" id="tab2" style="left:1129.00px;top:723.2px;font-size:36px;color:#9198a1;font-weight:400;letter-spacing:-0.050px;font-family:'Liberation Sans', sans-serif;">Variables</div><div class="t" id="h_env" style="left:878.00px;top:837.1px;font-size:42px;color:#f0f6fc;font-weight:700;letter-spacing:-1.844px;font-family:'Liberation Sans', sans-serif;">Environment secrets</div><div class="r" style="left:880px;top:909px;width:1920px;height:334px;border:2px solid #3d444d;box-sizing:border-box;border-radius:15px;"></div><div class="t" id="env_empty" style="left:1574.40px;top:999.0px;font-size:36px;color:#9198a1;font-weight:400;letter-spacing:0.095px;font-family:'Liberation Sans', sans-serif;">This environment has no secrets.</div><div class="r" style="left:1569.4px;top:1083px;width:541px;height:78.5px;background:#212830;border:2px solid #3d444d;box-sizing:border-box;border-radius:15px;"></div><div class="t" id="env_btn" style="left:1599.20px;top:1104.5px;font-size:36px;color:#f0f6fc;font-weight:700;letter-spacing:-0.648px;font-family:'Liberation Sans', sans-serif;">Manage environment secrets</div><div class="t" id="h_repo" style="left:878.00px;top:1343.4px;font-size:42px;color:#f0f6fc;font-weight:700;letter-spacing:-1.674px;font-family:'Liberation Sans', sans-serif;">Repository secrets</div><div class="r" style="left:2372px;top:1324.4px;width:428px;height:79.5px;background:#238636;border:2px solid rgba(240,246,252,0.1);box-sizing:border-box;border-radius:15px;"></div><div class="t" id="new_btn" style="left:2402.50px;top:1346.2px;font-size:36px;color:#ffffff;font-weight:700;letter-spacing:-0.600px;font-family:'Liberation Sans', sans-serif;">New repository secret</div><div class="r" style="left:880px;top:1423.5px;width:1920px;height:338px;border:2px solid #3d444d;box-sizing:border-box;border-radius:15px;background:linear-gradient(#151b23 0,#151b23 93px,transparent 93px);"></div><div class="r" style="left:881px;top:1515.5px;width:1918px;height:2px;background:#3d444d;"></div><div class="r" style="left:881px;top:1637.8px;width:1918px;height:2px;background:#3d444d;"></div><div class="t" id="th_name" style="left:921.50px;top:1455.4px;font-size:32px;color:#f0f6fc;font-weight:700;letter-spacing:-0.667px;font-family:'Liberation Sans', sans-serif;">Name</div><svg class="i" style="left:1020px;top:1450px;width:55px;height:40px" viewBox="0 0 55 40"><g stroke="#f0f6fc" stroke-linecap="round" fill="none"><path stroke-width="3.7" d="M8.7 11.65H15.4M8.7 21.75H20.2M8.7 31.9H27.3"/><path stroke-width="3.9" d="M38.95 15V32.8"/></g><path fill="#f0f6fc" d="M39 7.1L47.4 15.9H30.6Z"/></svg><div class="t" id="th_upd" style="left:2334.00px;top:1454.9px;font-size:32px;color:#9198a1;font-weight:700;letter-spacing:-0.400px;font-family:'Liberation Sans', sans-serif;">Last updated</div><svg class="i" style="left:922.0px;top:1555.0px;width:40px;height:40px;fill:#f0f6fc" viewBox="0 0 16 16"><path d="M4 4a4 4 0 0 1 8 0v2h.25c.966 0 1.75.784 1.75 1.75v5.5A1.75 1.75 0 0 1 12.25 15h-8.5A1.75 1.75 0 0 1 2 13.25v-5.5C2 6.784 2.784 6 3.75 6H4Zm8.25 3.5h-8.5a.25.25 0 0 0-.25.25v5.5c0 .138.112.25.25.25h8.5a.25.25 0 0 0 .25-.25v-5.5a.25.25 0 0 0-.25-.25ZM10.5 6V4a2.5 2.5 0 1 0-5 0v2Z"/></svg><div class="t s" id="sec0" style="left:980.60px;top:1564.0px;font-size:33px;color:#f0f6fc;font-weight:400;letter-spacing:-1.757px;font-family:'Liberation Mono', monospace;">DEV_DATABASE_URL</div><div class="t s" id="date0" style="left:2374.30px;top:1562.2px;font-size:32px;color:#f0f6fc;font-weight:400;letter-spacing:-0.278px;font-family:'Liberation Sans', sans-serif;">4 days ago</div><svg class="i" style="left:2608.2px;top:1557.7px;width:40px;height:40px;fill:#9198a1" viewBox="0 0 16 16"><path d="M11.013 1.427a1.75 1.75 0 0 1 2.474 0l1.086 1.086a1.75 1.75 0 0 1 0 2.474l-8.61 8.61c-.21.21-.47.364-.756.445l-3.251.93a.75.75 0 0 1-.927-.928l.929-3.25c.081-.286.235-.547.445-.758l8.61-8.61Zm.176 4.823L9.75 4.81l-6.286 6.287a.253.253 0 0 0-.064.108l-.558 1.953 1.953-.558a.253.253 0 0 0 .108-.064Zm1.238-3.763a.25.25 0 0 0-.354 0L10.811 3.75l1.439 1.44 1.263-1.263a.25.25 0 0 0 0-.354Z"/></svg><svg class="i" style="left:2698.0px;top:1558.0px;width:40px;height:40px;fill:#9198a1" viewBox="0 0 16 16"><path d="M11 1.75V3h2.25a.75.75 0 0 1 0 1.5H2.75a.75.75 0 0 1 0-1.5H5V1.75C5 .784 5.784 0 6.75 0h2.5C10.216 0 11 .784 11 1.75ZM4.496 6.675l.66 6.6a.25.25 0 0 0 .249.225h5.19a.25.25 0 0 0 .249-.225l.66-6.6a.75.75 0 0 1 1.492.149l-.66 6.6A1.748 1.748 0 0 1 10.595 15h-5.19a1.75 1.75 0 0 1-1.741-1.575l-.66-6.6a.75.75 0 1 1 1.492-.15ZM6.5 1.75V3h3V1.75a.25.25 0 0 0-.25-.25h-2.5a.25.25 0 0 0-.25.25Z"/></svg><svg class="i" style="left:922.0px;top:1677.3px;width:40px;height:40px;fill:#f0f6fc" viewBox="0 0 16 16"><path d="M4 4a4 4 0 0 1 8 0v2h.25c.966 0 1.75.784 1.75 1.75v5.5A1.75 1.75 0 0 1 12.25 15h-8.5A1.75 1.75 0 0 1 2 13.25v-5.5C2 6.784 2.784 6 3.75 6H4Zm8.25 3.5h-8.5a.25.25 0 0 0-.25.25v5.5c0 .138.112.25.25.25h8.5a.25.25 0 0 0 .25-.25v-5.5a.25.25 0 0 0-.25-.25ZM10.5 6V4a2.5 2.5 0 1 0-5 0v2Z"/></svg><div class="t s" id="sec1" style="left:980.60px;top:1685.9px;font-size:33px;color:#f0f6fc;font-weight:400;letter-spacing:-1.762px;font-family:'Liberation Mono', monospace;">PROD_DATABASE_URL</div><div class="t s" id="date1" style="left:2374.30px;top:1684.1px;font-size:32px;color:#f0f6fc;font-weight:400;letter-spacing:-0.278px;font-family:'Liberation Sans', sans-serif;">4 days ago</div><svg class="i" style="left:2608.2px;top:1680.0px;width:40px;height:40px;fill:#9198a1" viewBox="0 0 16 16"><path d="M11.013 1.427a1.75 1.75 0 0 1 2.474 0l1.086 1.086a1.75 1.75 0 0 1 0 2.474l-8.61 8.61c-.21.21-.47.364-.756.445l-3.251.93a.75.75 0 0 1-.927-.928l.929-3.25c.081-.286.235-.547.445-.758l8.61-8.61Zm.176 4.823L9.75 4.81l-6.286 6.287a.253.253 0 0 0-.064.108l-.558 1.953 1.953-.558a.253.253 0 0 0 .108-.064Zm1.238-3.763a.25.25 0 0 0-.354 0L10.811 3.75l1.439 1.44 1.263-1.263a.25.25 0 0 0 0-.354Z"/></svg><svg class="i" style="left:2698.0px;top:1680.3px;width:40px;height:40px;fill:#9198a1" viewBox="0 0 16 16"><path d="M11 1.75V3h2.25a.75.75 0 0 1 0 1.5H2.75a.75.75 0 0 1 0-1.5H5V1.75C5 .784 5.784 0 6.75 0h2.5C10.216 0 11 .784 11 1.75ZM4.496 6.675l.66 6.6a.25.25 0 0 0 .249.225h5.19a.25.25 0 0 0 .249-.225l.66-6.6a.75.75 0 0 1 1.492.149l-.66 6.6A1.748 1.748 0 0 1 10.595 15h-5.19a1.75 1.75 0 0 1-1.741-1.575l-.66-6.6a.75.75 0 1 1 1.492-.15ZM6.5 1.75V3h3V1.75a.25.25 0 0 0-.25-.25h-2.5a.25.25 0 0 0-.25.25Z"/></svg><svg class="ov" width="3024" height="1890" viewBox="0 0 3024 1890"><path fill-rule="evenodd" fill="rgba(0,0,0,0.45)" d="M0,0H3024V1890H0ZM2040,26H2265A16,16 0 0 1 2281,42V109A16,16 0 0 1 2265,125H2040A16,16 0 0 1 2024,109V42A16,16 0 0 1 2040,26ZM60.5,1588H563A15,15 0 0 1 578,1603V1742A15,15 0 0 1 563,1757H60.5A15,15 0 0 1 45.5,1742V1603A15,15 0 0 1 60.5,1588ZM866,1291H2809A15,15 0 0 1 2824,1306V1786.5A15,15 0 0 1 2809,1801.5H866A15,15 0 0 1 851,1786.5V1306A15,15 0 0 1 866,1291Z"/><rect x="2026" y="28" width="253" height="95" rx="14" ry="14" fill="none" stroke="#08e693" stroke-width="4"/><rect x="47.5" y="1590" width="528.5" height="165" rx="13" ry="13" fill="none" stroke="#08e693" stroke-width="4"/><rect x="853" y="1293" width="1969" height="506.5" rx="13" ry="13" fill="none" stroke="#08e693" stroke-width="4"/></svg>
</body></html>
